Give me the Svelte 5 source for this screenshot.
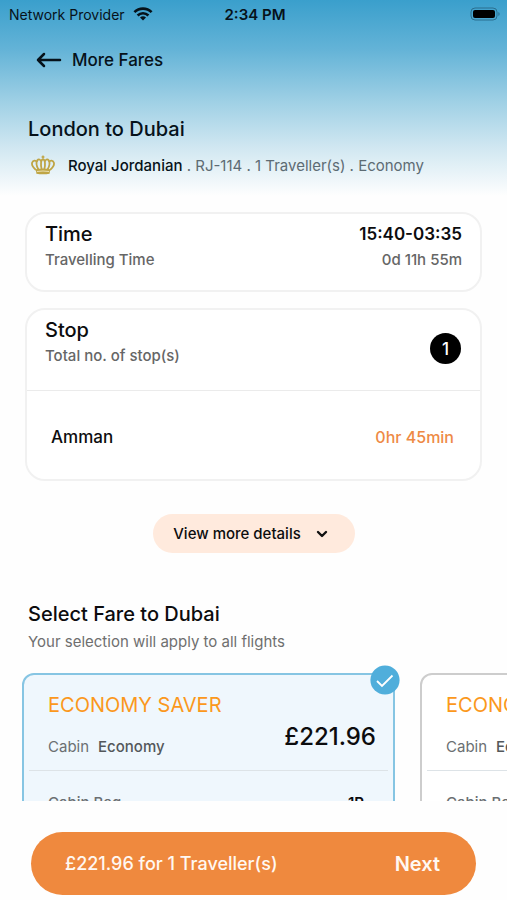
<script>
  const stops = [{ city: 'Amman', layover: '0hr 45min' }];

  const fares = [
    { id: 'saver', name: 'ECONOMY SAVER', cabin: 'Economy', price: '£221.96', bag: '1P' },
    { id: 'flex', name: 'ECONOMY FLEX', cabin: 'Economy', price: '£261.96', bag: '1P' }
  ];

  let selected = $state('saver');
  const current = $derived(fares.find((fare) => fare.id === selected));
</script>

<div class="screen">
  <main>
    <header>
      <div class="status">
        <div class="network">
          <span>Network Provider</span>
          <svg width="20" height="14" viewBox="0 0 20 14" aria-hidden="true">
            <g fill="none" stroke="#06121a" stroke-width="2.6">
              <path d="M1.4 5.2a12.2 12.2 0 0 1 17.2 0" />
              <path d="M4.6 8.5a7.7 7.7 0 0 1 10.8 0" />
            </g>
            <path d="M10 13.6 7 10.6a4.3 4.3 0 0 1 6 0z" fill="#06121a" />
          </svg>
        </div>
        <span class="clock">2:34 PM</span>
        <svg class="battery" width="31" height="14" viewBox="0 0 31 14" aria-hidden="true">
          <rect x="1" y="1" width="26" height="12" rx="4" fill="none" stroke="#2b6f8f" />
          <rect x="3" y="3" width="22" height="8" rx="2" fill="#000" />
          <path d="M28.4 5v4c1.6-.5 1.6-3.500 0-4z" fill="#2b6f8f" />
        </svg>
      </div>

      <button class="back" type="button">
        <svg width="26" height="16" viewBox="0 0 26 16" aria-hidden="true">
          <path d="M24 8H2M8 2 2 8l6 6" fill="none" stroke="#06121a" stroke-width="2.500" stroke-linecap="round" stroke-linejoin="round" />
        </svg>
        More Fares
      </button>

      <div class="route">
        <h1>London to Dubai</h1>
        <div class="flight">
          <svg width="24" height="20" viewBox="0 0 24 20" aria-hidden="true">
            <g fill="none" stroke="#bfa545" stroke-width="1.800" stroke-linejoin="round">
              <path d="M5 15C2 12.500.5 9.500 1.200 7.500 2 5.300 4.800 4.800 6 7.200" />
              <path d="M19 15c3-2.500 4.500-5.500 3.800-7.500C22 5.300 19.200 4.800 18 7.200" />
              <path d="M7.500 14.500C5.500 11 5.200 7 6.300 5.400 7.600 3.600 9.600 4.400 10 6.500" />
              <path d="M16.500 14.500c2-3.500 2.300-7.500 1.200-9.100C16.400 3.600 14.400 4.400 14 6.500" />
              <path d="M10.700 14.500C9.500 10 9.700 4.300 12 4.300s2.500 5.700 1.300 10.200" />
            </g>
            <path d="M12 .6v3.200M10.600 2h2.800" stroke="#bfa545" stroke-width="1.300" />
            <path d="M4.800 14.300q7.200-1.600 14.400 0l-.6 4.500q-6.600 1-13.200 0z" fill="#bfa545" />
            <path d="M6 16.500q6-1 12 0" fill="none" stroke="#eee6c0" stroke-width=".9" />
          </svg>
          <p><strong>Royal Jordanian</strong> . RJ-114 . 1 Traveller(s) . Economy</p>
        </div>
      </div>
    </header>

    <section class="card time">
      <div>
        <h2>Time</h2>
        <p>Travelling Time</p>
      </div>
      <div class="right">
        <strong>15:40-03:35</strong>
        <p>0d 11h 55m</p>
      </div>
    </section>

    <section class="card">
      <div class="stop-head">
        <div>
          <h2>Stop</h2>
          <p>Total no. of stop(s)</p>
        </div>
        <span class="count">{stops.length}</span>
      </div>
      {#each stops as stop}
        <div class="stop">
          <span>{stop.city}</span>
          <span class="layover">{stop.layover}</span>
        </div>
      {/each}
    </section>

    <button class="more" type="button">
      View more details
      <svg width="12" height="8" viewBox="0 0 12 8" aria-hidden="true">
        <path d="M2 2l4 4 4-4" fill="none" stroke="#111" stroke-width="2.400" stroke-linecap="round" stroke-linejoin="round" />
      </svg>
    </button>

    <section class="select">
      <h2>Select Fare to Dubai</h2>
      <p>Your selection will apply to all flights</p>
    </section>

    <div class="fares" role="radiogroup" aria-label="Select Fare to Dubai">
      {#each fares as fare}
        <label class="fare" class:active={selected === fare.id}>
          <input type="radio" name="fare" value={fare.id} bind:group={selected} />
          {#if selected === fare.id}
            <svg class="tick" width="30" height="30" viewBox="0 0 30 30" aria-hidden="true">
              <circle cx="15" cy="15" r="14.600" fill="#50aedb" />
              <path d="M7 16l5 5 10.500-10.500" fill="none" stroke="#fff" stroke-width="1.800" />
            </svg>
          {/if}
          <span class="fare-name">{fare.name}</span>
          <span class="fare-row">
            <span class="cabin">Cabin <b>{fare.cabin}</b></span>
            <span class="price">{fare.price}</span>
          </span>
          <span class="bag"><span>Cabin Bag</span><b>{fare.bag}</b></span>
        </label>
      {/each}
    </div>
  </main>

  <footer>
    <button class="next" type="button">
      <span>{current.price} for 1 Traveller(s)</span>
      <strong>Next</strong>
    </button>
  </footer>
</div>

<style>
  :global(body) {
    margin: 0;
    background: #fff;
  }

  .screen {
    display: flex;
    flex-direction: column;
    height: 100vh;
    overflow: hidden;
    font-family: Inter, 'Liberation Sans', sans-serif;
    font-size: 15px;
    color: #0c0c0e;
    background: #fefefe;
  }

  .screen * {
    box-sizing: border-box;
  }

  h1,
  h2,
  p {
    margin: 0;
  }

  h1,
  h2 {
    font-size: 20px;
    line-height: 24px;
    font-weight: 450;
  }

  button {
    border: 0;
    font-family: inherit;
    color: inherit;
    cursor: pointer;
  }

  main {
    flex: 1;
    min-height: 0;
    overflow-y: auto;
    scrollbar-width: none;
  }

  header {
    height: 196px;
    background: linear-gradient(#3a9fcc 0, #63b3d7 25%, #9bcee4 50%, #d0e7f1 75%, #fefefe 100%);
    color: #06121a;
  }

  .status {
    display: grid;
    grid-template-columns: 1fr auto 1fr;
    align-items: center;
    height: 28px;
    padding: 0 6px 0 9px;
    font-size: 14px;
  }

  .network {
    display: flex;
    align-items: center;
    gap: 8px;
  }

  .clock {
    font-size: 15px;
    font-weight: 600;
  }

  .battery {
    justify-self: end;
  }

  .back {
    display: flex;
    align-items: center;
    gap: 10px;
    height: 32px;
    margin: 16px 0 0 36px;
    padding: 0;
    background: none;
    font-size: 17px;
    font-weight: 500;
  }

  .route {
    padding: 41px 28px 0;
  }

  .flight {
    display: flex;
    align-items: center;
    gap: 13px;
    height: 24px;
    margin-top: 12px;
    padding-left: 3px;
    color: #5d6b73;
  }

  .flight p {
    white-space: nowrap;
  }

  .flight svg {
    flex: none;
  }

  .flight strong {
    font-weight: 500;
    color: #06121a;
  }

  .card {
    margin: 16px 25px 0;
    border: 2px solid #f1f1f1;
    border-radius: 20px;
    background: #fff;
  }

  .card p {
    margin-top: 4px;
    font-size: 15px;
    line-height: 20px;
    font-weight: 450;
    color: #666;
  }

  .time {
    display: flex;
    justify-content: space-between;
    height: 80px;
    padding: 8px 18px;
  }

  .right {
    text-align: right;
  }

  .right strong {
    display: block;
    font-size: 17px;
    line-height: 24px;
    font-weight: 600;
  }

  .stop-head {
    display: flex;
    justify-content: space-between;
    height: 81px;
    padding: 8px 19px 0 18px;
    border-bottom: 1px solid #ebebeb;
  }

  .count {
    display: grid;
    place-items: center;
    width: 31px;
    height: 31px;
    margin-top: 15px;
    border-radius: 50%;
    background: #000;
    color: #fff;
    font-size: 17px;
    font-weight: 500;
  }

  .stop {
    display: flex;
    justify-content: space-between;
    align-items: center;
    height: 88px;
    padding: 4px 26px 0 24px;
    font-size: 17px;
    font-weight: 500;
  }

  .layover {
    font-size: 16px;
    color: #ee8a45;
  }

  .more {
    display: flex;
    align-items: center;
    justify-content: center;
    gap: 15px;
    width: 202px;
    height: 39px;
    margin: 33px auto 0;
    padding: 0 6px 0 0;
    border-radius: 20px;
    background: #ffeadd;
    font-size: 15px;
    font-weight: 500;
  }

  .select {
    padding: 49px 28px 0;
  }

  .select p {
    margin-top: 6px;
    font-size: 15px;
    line-height: 20px;
    color: #6f6f6f;
  }

  .fares {
    display: flex;
    gap: 25px;
    padding: 21px 22px 24px;
    overflow-x: auto;
    scrollbar-width: none;
  }

  .fare {
    position: relative;
    display: block;
    flex: 0 0 373px;
    padding: 18px 5px 24px;
    border: 2px solid #cdcdcd;
    border-radius: 12px;
    background: #fff;
    cursor: pointer;
  }

  .fare.active {
    border-color: #86c5e3;
    background: #eff7fd;
  }

  .fare input {
    position: absolute;
    opacity: 0;
  }

  .tick {
    position: absolute;
    top: -10px;
    right: -7px;
  }

  .fare-name {
    display: block;
    padding: 0 19px;
    font-size: 20px;
    line-height: 24px;
    color: #fb981c;
  }

  .fare-row {
    display: flex;
    justify-content: space-between;
    height: 54px;
    padding: 4px 12px 0 19px;
    border-bottom: 1px solid #dde3e7;
  }

  .cabin {
    display: flex;
    gap: 9px;
    padding-top: 16px;
    font-size: 15px;
    line-height: 20px;
    color: #6b6f72;
  }

  .cabin b {
    font-weight: 450;
    color: #54585b;
  }

  .price {
    font-size: 24px;
    line-height: 32px;
    font-weight: 500;
  }

  .bag {
    display: flex;
    justify-content: space-between;
    padding: 22px 24px 0 19px;
    font-size: 15px;
    line-height: 20px;
    font-weight: 500;
    color: #6b6f72;
  }

  .bag b {
    font-weight: 600;
    color: #0c0c0e;
  }

  footer {
    padding: 31px 31px 5px;
    background: #fefefe;
  }

  .next {
    display: flex;
    justify-content: space-between;
    align-items: center;
    width: 100%;
    height: 63px;
    padding: 0 36px 0 34px;
    border-radius: 32px;
    background: #ef893e;
    color: #fff8f2;
    font-size: 18px;
    font-weight: 500;
  }

  .next strong {
    font-size: 20px;
    font-weight: 600;
  }
</style>
